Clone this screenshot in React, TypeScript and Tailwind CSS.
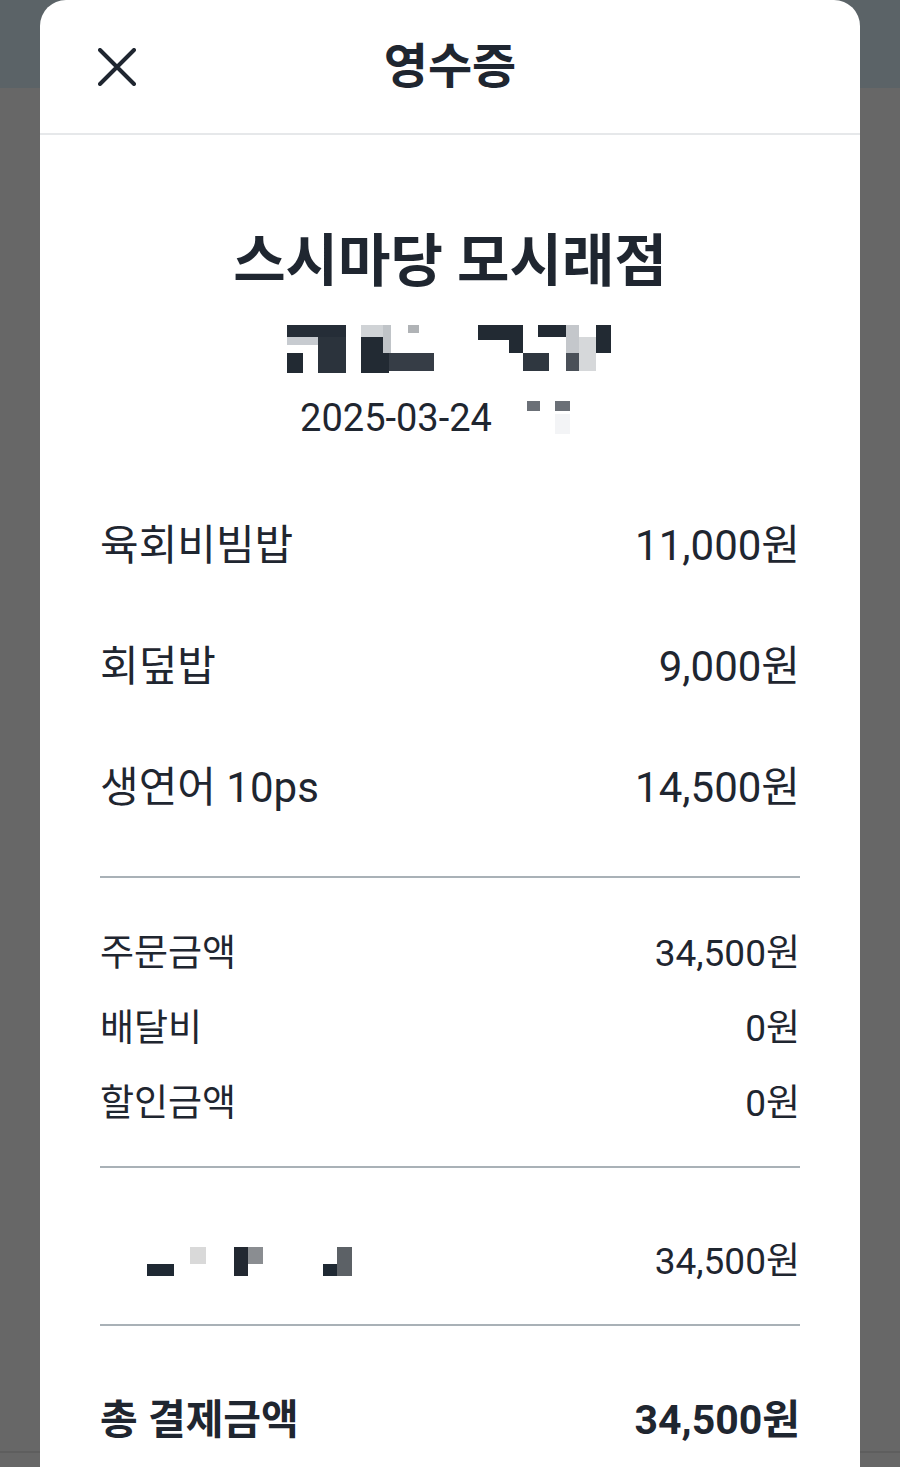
const ink = "text-[#1f2630]";

const CloseIcon = () => (
  <svg width="38" height="38" viewBox="0 0 38 38" fill="none">
    <path d="M2 2L36 36M36 2L2 36" stroke="#1f2630" strokeWidth="4" strokeLinecap="round" />
  </svg>
);

const AddressMosaic = () => (
  <svg width="326" height="48" viewBox="0 0 326 48">
    <rect x="0" y="0" width="59" height="18" fill="#252d37" />
    <rect x="0" y="12" width="31" height="8" fill="#c7cbd0" />
    <rect x="0" y="28" width="16" height="20" fill="#222a33" />
    <rect x="31" y="12" width="28" height="36" fill="#2b333c" />
    <rect x="74" y="0" width="22" height="14" fill="#d0d3d6" />
    <rect x="121" y="0" width="11" height="8" fill="#b0b3b6" />
    <rect x="74" y="12" width="28" height="36" fill="#222a33" />
    <rect x="96" y="0" width="8" height="28" fill="#c0c4c8" />
    <rect x="102" y="28" width="45" height="18" fill="#363d46" />
    <rect x="191" y="0" width="45" height="15" fill="#222a33" />
    <rect x="222" y="15" width="14" height="13" fill="#222a33" />
    <rect x="236" y="28" width="26" height="18" fill="#2f3740" />
    <rect x="251" y="0" width="28" height="12" fill="#222a33" />
    <rect x="279" y="0" width="13" height="28" fill="#c4c7cb" />
    <rect x="279" y="28" width="13" height="18" fill="#4a5058" />
    <rect x="292" y="12" width="17" height="34" fill="#d6d8da" />
    <rect x="309" y="0" width="15" height="28" fill="#222a33" />
  </svg>
);

const TimeMosaic = () => (
  <svg width="108" height="36" viewBox="0 0 108 36">
    <rect x="35" y="1" width="13" height="10" fill="#6b7077" />
    <rect x="63" y="1" width="15" height="10" fill="#6b7077" />
    <rect x="63" y="14" width="15" height="20" fill="#f3f4f6" />
  </svg>
);

const MethodMosaic = () => (
  <svg width="260" height="30" viewBox="0 0 260 30">
    <rect x="47" y="17" width="27" height="12" fill="#1f2933" />
    <rect x="90" y="0" width="16" height="17" fill="#d9d9d9" />
    <rect x="134" y="0" width="14" height="29" fill="#222831" />
    <rect x="148" y="0" width="15" height="17" fill="#8a8d91" />
    <rect x="223" y="17" width="14" height="12" fill="#1f2933" />
    <rect x="237" y="0" width="15" height="29" fill="#5c6166" />
  </svg>
);

const items = [
  { name: "육회비빔밥", price: "11,000원" },
  { name: "회덮밥", price: "9,000원" },
  { name: "생연어 10ps", price: "14,500원" },
];

const summary = [
  { name: "주문금액", price: "34,500원" },
  { name: "배달비", price: "0원" },
  { name: "할인금액", price: "0원" },
];

export default function App() {
  return (
    <div className="min-h-[1467px] bg-[linear-gradient(to_bottom,#5b6367_0px,#5b6367_88px,#676767_88px,#676767_1451px,#5e5e5e_1451px,#5e5e5e_1453px,#676767_1453px)] px-[40px] font-['Roboto','Noto_Sans_CJK_KR',sans-serif]">
      <div className={`h-[1467px] overflow-hidden rounded-t-[26px] bg-white ${ink}`}>
        <header className="grid h-[135px] grid-cols-[1fr_auto_1fr] items-center border-b-2 border-[#e6e8ea] px-[58px]">
          <button className="flex h-[38px] w-[38px] items-center justify-center">
            <CloseIcon />
          </button>
          <h1 className="text-[48px] font-bold leading-none">영수증</h1>
          <div />
        </header>

        <div className="px-[60px]">
          <div className="mt-[98px] text-center text-[57px] font-bold leading-[57px]">
            스시마당 모시래점
          </div>
          <div className="mt-[35px] flex justify-center">
            <AddressMosaic />
          </div>
          <div className="mt-[25px] flex items-center justify-center">
            <span className="text-[38px] leading-[40px]">2025-03-24</span>
            <TimeMosaic />
          </div>

          <div className="mt-[47px]">
            {items.map((it) => (
              <div key={it.name} className="flex h-[121px] items-center justify-between text-[42px]">
                <span>{it.name}</span>
                <span>{it.price}</span>
              </div>
            ))}
          </div>

          <div className="mt-[28px] h-[2px] bg-[#a9b1b7]" />

          <div className="mt-[38px]">
            {summary.map((it) => (
              <div key={it.name} className="flex h-[75px] items-center justify-between text-[37px]">
                <span>{it.name}</span>
                <span>{it.price}</span>
              </div>
            ))}
          </div>

          <div className="mt-[25px] h-[2px] bg-[#a9b1b7]" />

          <div className="mt-[54px] flex h-[80px] items-center justify-between text-[37px]">
            <MethodMosaic />
            <span>34,500원</span>
          </div>

          <div className="mt-[22px] h-[2px] bg-[#a9b1b7]" />

          <div className="mt-[65px] flex h-[60px] items-center justify-between text-[41px] font-bold">
            <span>총 결제금액</span>
            <span>34,500원</span>
          </div>
        </div>
      </div>
    </div>
  );
}
